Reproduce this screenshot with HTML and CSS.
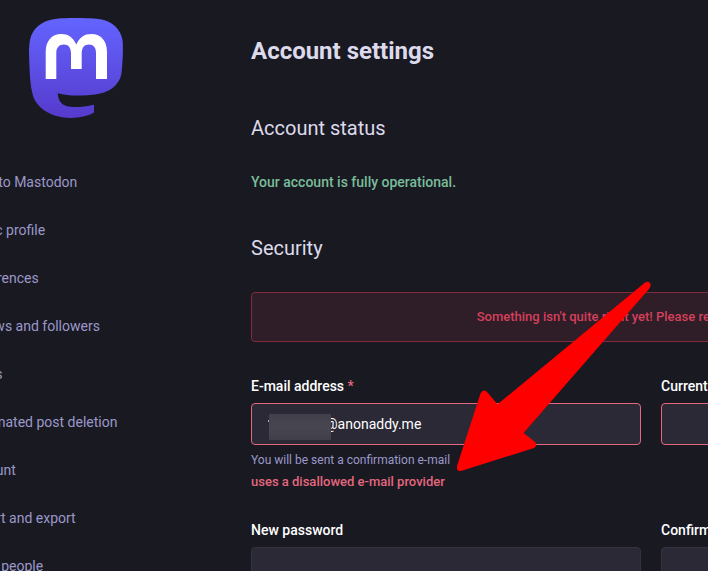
FILE: index.html
```html
<!DOCTYPE html>
<html lang="en">
<head>
<meta charset="utf-8">
<title>Account settings</title>
<link rel="stylesheet" href="styles.css">
</head>
<body>
<div class="layout">
  <aside class="sidebar">
    <a class="logo" href="#" aria-label="Mastodon">
      <svg width="94" height="100" viewBox="0 0 94 100" aria-hidden="true">
        <defs>
          <linearGradient id="brand" x1="0" y1="0" x2="0" y2="1">
            <stop offset="0" stop-color="#6364ff"/>
            <stop offset="1" stop-color="#563acc"/>
          </linearGradient>
        </defs>
        <path fill="url(#brand)" d="M46 0C30 0 26.500 1 24.200 1.300C13.400 2.900 3.500 10.500 1.100 21.400C0 26.700-.1 32.700.1 38.100C.4 45.900.5 53.700 1.200 61.500C1.600 66.700 2.500 71.800 3.700 76.800C6 86.100 15.200 93.900 24.200 97C33.900 100.300 44.300 100.900 54.200 98.600C58 97.700 62 96.500 65 94.500V86.700C58.700 88.200 52 89 45.100 89C33.800 89 30.800 83.600 30 81.400C29.300 79.500 28.800 77.400 28.700 75.200C35 76.700 41.500 77.500 48 77.500C55 77.500 62 77.100 69 76C80 74.200 91.500 67 92.700 53.500C93.300 47 94 38 93.900 32C93.900 29 94 25.500 93.500 22.100C92 11.400 82.700 2.900 71.600 1.300C69.700 1 62.600 0 46 0Z"/>
        <path fill="#fff" d="M16.700 61V34C16.700 23 22.500 16 32.300 16C39 16 44 19 47.300 26.500C50.600 19 55.600 16 62.300 16C72.200 16 78 23 78 34V61H67V35C67 29.500 64.500 26.500 60 26.500C55.200 26.500 52.700 29.800 52.700 35.500V51H42V35.500C42 29.800 39.500 26.500 34.700 26.500C30.200 26.500 27.300 29.500 27.300 35V61Z"/>
      </svg>
    </a>
    <nav class="menu">
      <a href="#">Back to Mastodon</a>
      <a href="#">Public profile</a>
      <a href="#">Preferences</a>
      <a href="#">Follows and followers</a>
      <a href="#">Filters</a>
      <a href="#">Automated post deletion</a>
      <a href="#">Account</a>
      <a href="#">Import and export</a>
      <a href="#">Invite people</a>
    </nav>
  </aside>
  <main class="content">
    <h1>Account settings</h1>
    <h2>Account status</h2>
    <p class="status">Your account is fully operational.</p>
    <h2>Security</h2>
    <form>
      <p class="flash">Something isn't quite right yet! Please review 2 errors below.</p>
      <div class="fields">
        <div class="field invalid">
          <label for="email">E-mail address <abbr>*</abbr></label>
          <div class="masked">
            <input id="email" type="text" value="@anonaddy.me">
            <span class="mask"></span>
          </div>
          <span class="hint">You will be sent a confirmation e-mail</span>
          <span class="error">uses a disallowed e-mail provider</span>
        </div>
        <div class="field invalid">
          <label for="current">Current password <abbr>*</abbr></label>
          <input id="current" type="password">
        </div>
        <div class="field">
          <label for="new">New password</label>
          <input id="new" type="password">
        </div>
        <div class="field">
          <label for="confirm">Confirm password</label>
          <input id="confirm" type="password">
        </div>
      </div>
    </form>
  </main>
</div>
<svg class="arrow" width="194" height="190" viewBox="457 281 194 190" aria-hidden="true">
  <path d="M645 282.500Q649 280.500 650.500 284Q651 286.500 649 289L523.500 433L534.500 441.500Q538.500 445 534 448L461 471Q456 471.500 457 466L480.500 393.500Q483.500 388 487.500 392.500L497.500 404.300Z" fill="#f00"/>
</svg>
</body>
</html>
```
FILE: styles.css
```css
* {
  box-sizing: border-box;
}

body {
  margin: 0;
  height: 100vh;
  overflow: hidden;
  background: #191922;
  color: #fff;
  font: 14px/20px Roboto, sans-serif;
}

.layout {
  display: flex;
}

.sidebar {
  flex: 0 0 287px;
  margin-left: -36px;
}

.logo {
  display: block;
  padding: 18px 0 40px 65px;
}

.logo svg {
  display: block;
}

.menu a {
  display: block;
  padding: 14px 0;
  color: #9b98c9;
  text-decoration: none;
}

.content {
  flex: 1 0 800px;
  padding-top: 36px;
}

h1,
h2,
p {
  margin: 0;
}

h1 {
  margin-bottom: 48px;
  color: #dddaec;
  font-size: 24px;
  line-height: 30px;
  font-weight: 700;
}

h2 {
  margin-bottom: 30px;
  color: #dddaec;
  font-size: 20px;
  line-height: 28px;
  font-weight: 400;
}

.status {
  margin-bottom: 42px;
  color: #79bd9a;
  font-weight: 500;
}

.flash {
  margin-bottom: 34px;
  padding: 14px;
  border: 1px solid #852a3c;
  border-radius: 4px;
  background: #2f1d27;
  color: #d5405c;
  font-size: 13px;
  font-weight: 500;
  text-align: center;
}

.fields {
  display: grid;
  grid-template-columns: 1fr 1fr;
  gap: 27px 20px;
}

label {
  display: block;
  margin-bottom: 7px;
  font-weight: 500;
}

abbr,
.error {
  color: #e4677e;
}

input {
  display: block;
  width: 100%;
  height: 42px;
  padding: 10px 15px;
  border: 1px solid #34323f;
  border-radius: 4px;
  outline: 0;
  background: #2a2935;
  color: #fff;
  font: inherit;
}

.invalid input {
  border-color: #e4677e;
}

.masked {
  position: relative;
}

.masked input {
  padding-left: 73px;
}

.mask {
  position: absolute;
  left: 18px;
  top: 11px;
  width: 62px;
  height: 26px;
  background: linear-gradient(#41404a, #484751 50%, #403f49);
}

.mask::before {
  content: "";
  position: absolute;
  left: -1px;
  top: 6px;
  width: 1px;
  height: 2px;
  background: #aaa9b0;
}

.hint,
.error {
  display: block;
}

.hint {
  margin-top: 4px;
  color: #9b98c9;
  font-size: 12px;
  line-height: 22px;
}

.error {
  font-size: 13px;
  line-height: 22px;
  font-weight: 500;
}

.arrow {
  position: absolute;
  left: 457px;
  top: 281px;
}
```
